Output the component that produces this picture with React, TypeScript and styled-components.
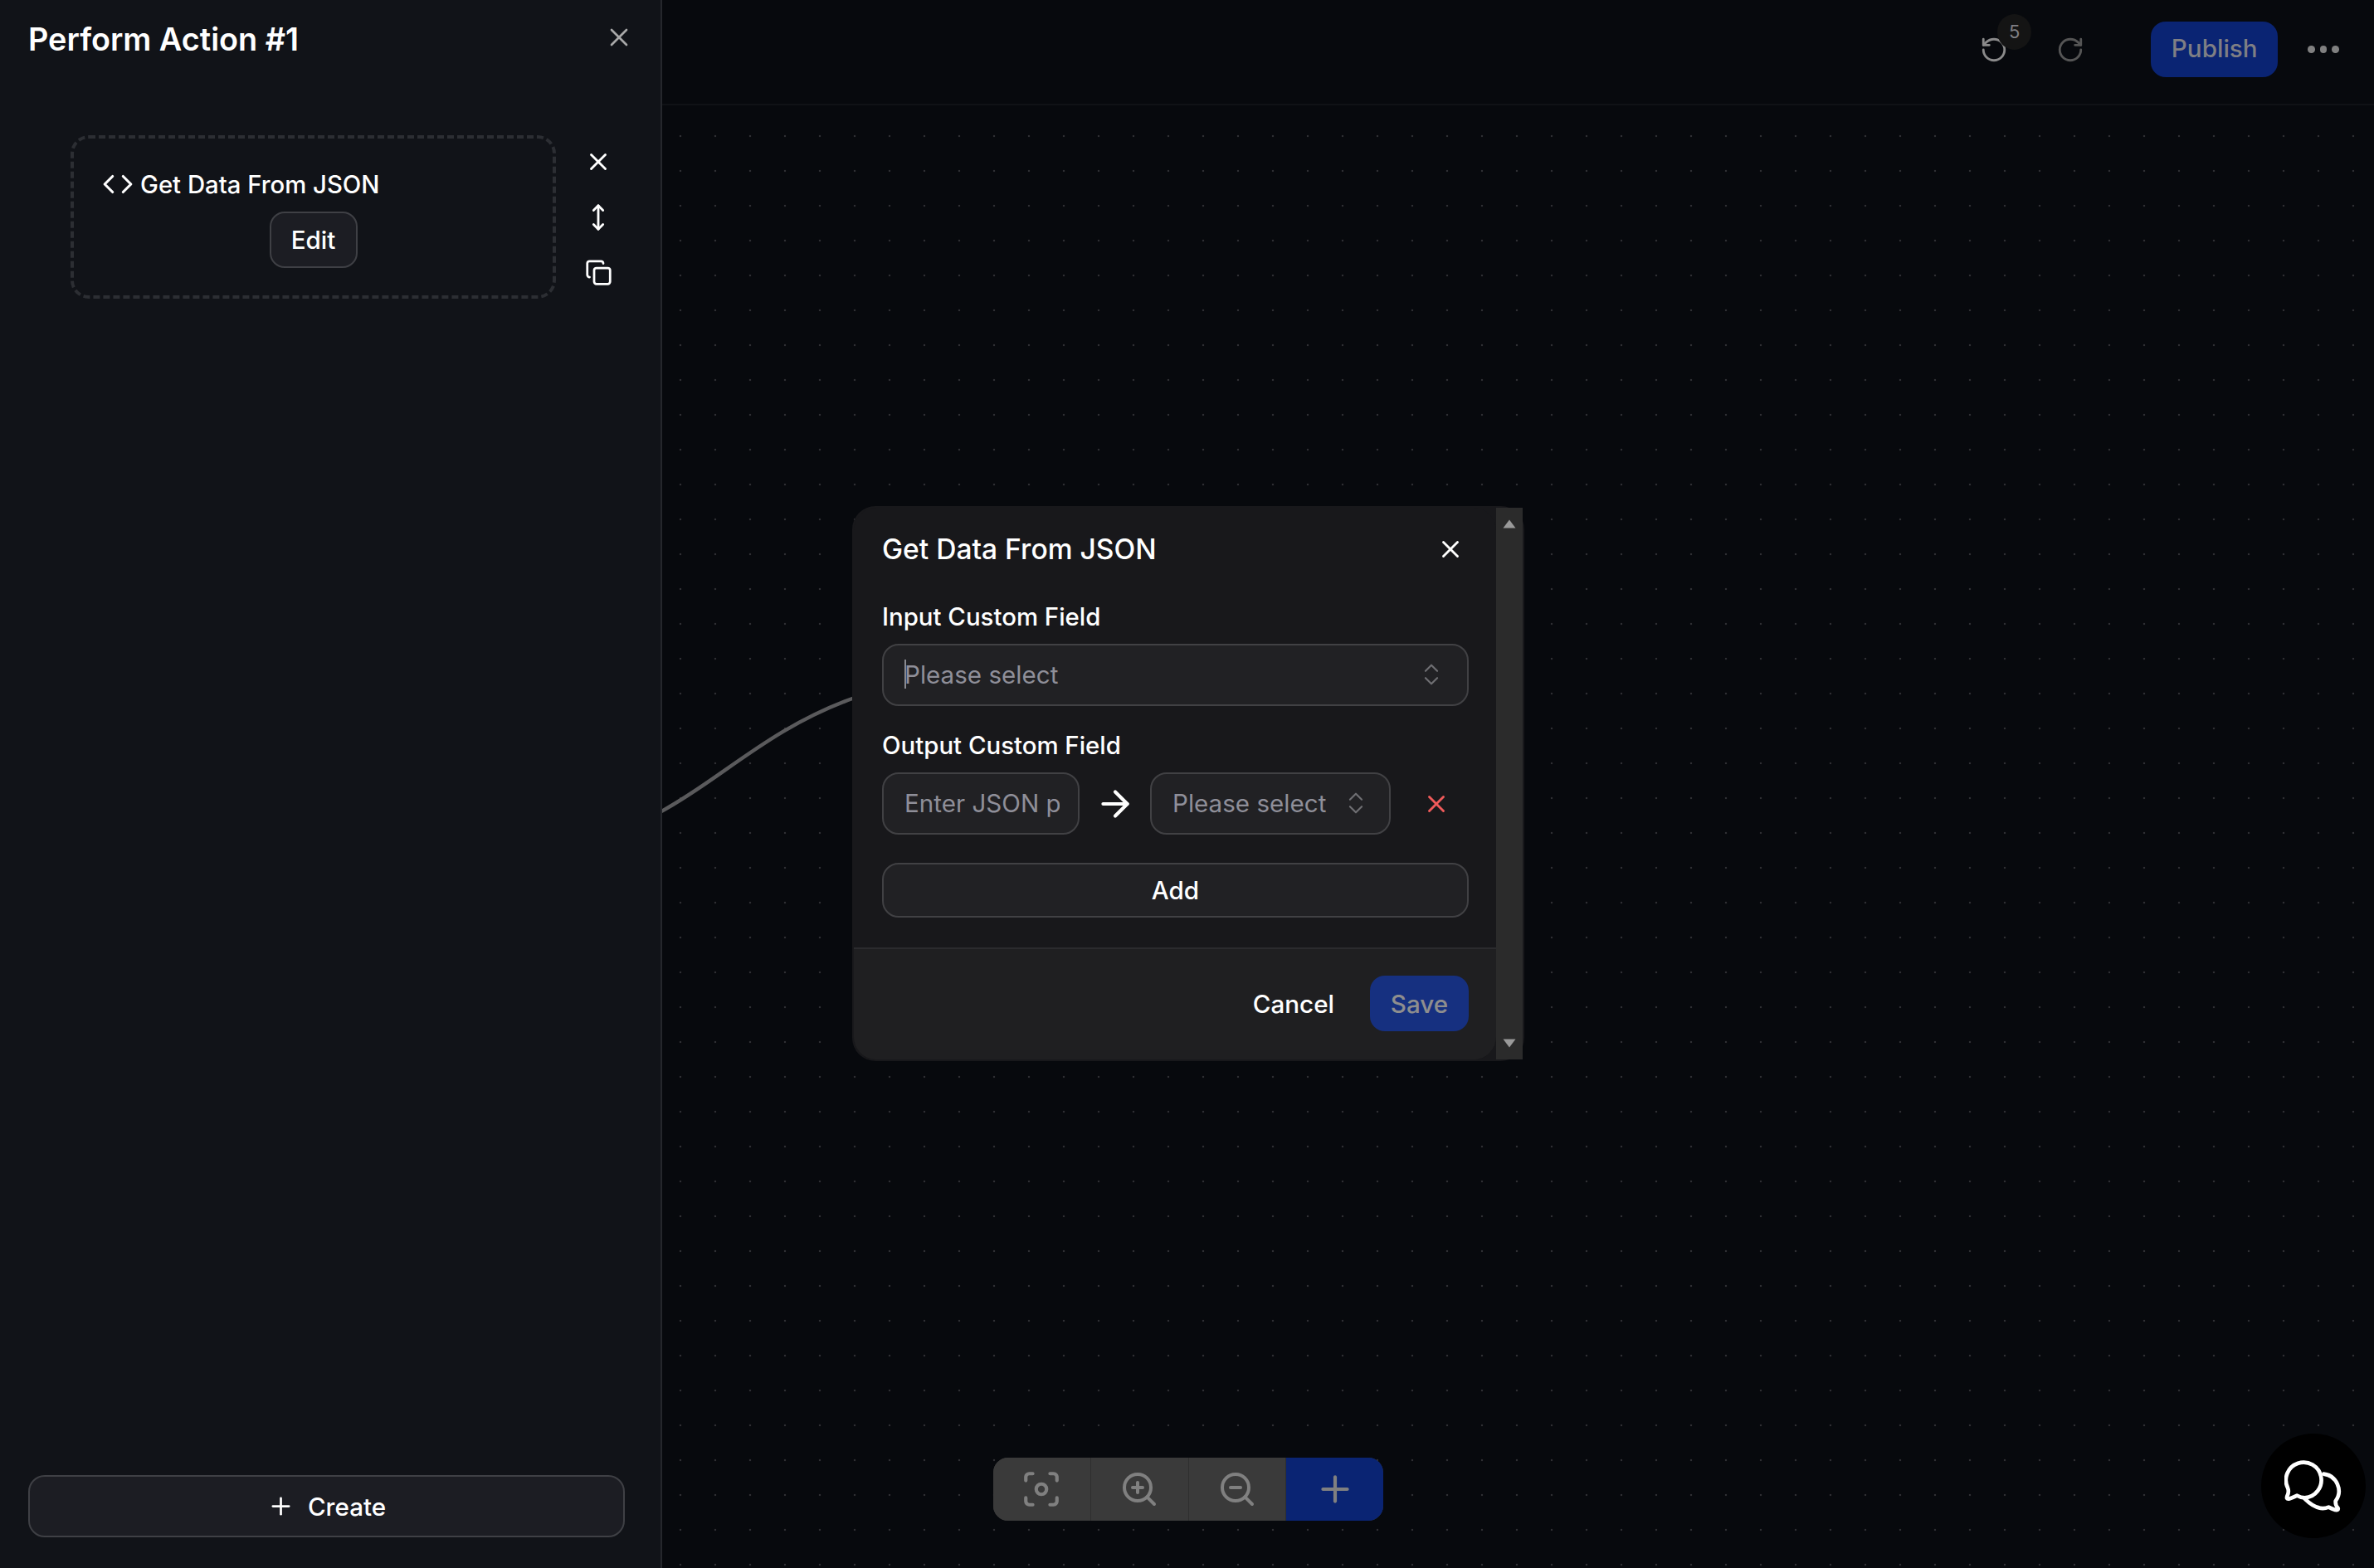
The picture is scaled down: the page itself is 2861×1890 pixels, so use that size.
import styled, { createGlobalStyle } from 'styled-components';
import {
    ArrowRight,
    ChevronsUpDown,
    Code,
    Copy,
    Focus,
    MoveVertical,
    Plus,
    RotateCcw,
    RotateCw,
    X,
    ZoomIn,
    ZoomOut,
} from 'lucide-react';

const GlobalStyle = createGlobalStyle`
    * {
        box-sizing: border-box;
    }
    html, body {
        margin: 0;
        height: 100%;
        background: #07090d;
        overflow: hidden;
    }
    body {
        font-family: Inter, "Liberation Sans", sans-serif;
        color: #ffffff;
    }
    #root {
        height: 100%;
    }
`;

const Page = styled.div`
    display: flex;
    height: 100%;
`;

const Sidebar = styled.aside`
    width: 798px;
    flex: none;
    display: flex;
    flex-direction: column;
    background: #111318;
    border-right: 2px solid #25272c;
`;

const SidebarHeader = styled.div`
    display: flex;
    align-items: center;
    justify-content: space-between;
    padding: 25px 32px 0 34px;
`;

const SidebarTitle = styled.h1`
    margin: 0;
    font-size: 37.8px;
    line-height: 44px;
    font-weight: 600;
`;

const IconButton = styled.button<{ $tone?: string }>`
    display: flex;
    align-items: center;
    justify-content: center;
    padding: 0;
    background: none;
    border: none;
    color: ${(p) => p.$tone || '#ffffff'};
`;

const CloseOffset = styled.span`
    display: flex;
    margin-top: -5px;
`;

const CardRow = styled.div`
    display: flex;
    margin-top: 94px;
    padding-left: 85px;
`;

const DashedCard = styled.div`
    width: 585px;
    height: 197px;
    display: flex;
    flex-direction: column;
    padding: 36px 31px 0 34px;
    border: 4px dashed #2c2e33;
    border-radius: 22px;
`;

const CardTitle = styled.div`
    display: flex;
    align-items: center;
    gap: 8px;
    height: 38px;
    font-size: 29.3px;
    font-weight: 500;
`;

const EditButton = styled.button`
    align-self: center;
    width: 106px;
    height: 68px;
    margin: 14px 0 0 -3px;
    background: #1c1d23;
    border: 2px solid #3f4045;
    border-radius: 18px;
    color: #ffffff;
    font-family: inherit;
    font-size: 29.6px;
    font-weight: 500;
`;

const CardActions = styled.div`
    display: flex;
    flex-direction: column;
    gap: 33px;
    margin: 15px 0 0 34px;
`;

const SidebarFooter = styled.div`
    margin-top: auto;
    padding: 0 43px 37px 34px;
`;

const OutlineButton = styled.button<{ $height: number }>`
    width: 100%;
    height: ${(p) => p.$height}px;
    display: flex;
    align-items: center;
    justify-content: center;
    gap: 16px;
    background: ${(p) => (p.$height === 75 ? '#1c1d23' : '#212124')};
    border: 2px solid ${(p) => (p.$height === 75 ? '#3f4045' : '#414144')};
    border-radius: 20px;
    color: #ffffff;
    font-family: inherit;
    font-size: 29.6px;
    font-weight: 500;
`;

const Workspace = styled.main`
    position: relative;
    flex: 1;
    display: flex;
    flex-direction: column;
    background: #07090d;
`;

const TopBar = styled.header`
    height: 127px;
    flex: none;
    display: flex;
    align-items: center;
    justify-content: flex-end;
    padding: 0 42px 6px 0;
    border-bottom: 2px solid #101216;
`;

const HistoryGroup = styled.div`
    display: flex;
    align-items: center;
    gap: 58px;
    margin-right: 80px;
`;

const UndoWrap = styled.div`
    position: relative;
    display: flex;
`;

const CountBadge = styled.span`
    position: absolute;
    left: 21px;
    top: -26px;
    width: 41px;
    height: 43px;
    display: flex;
    align-items: center;
    justify-content: center;
    background: #141414;
    border-radius: 50%;
    color: #7f7f84;
    font-size: 22px;
`;

const PublishButton = styled.button`
    width: 153px;
    height: 67px;
    padding: 0 0 3px 0;
    background: #0a2473;
    border: none;
    border-radius: 18px;
    color: #7f7f84;
    font-family: inherit;
    font-size: 29.6px;
    font-weight: 500;
`;

const MoreDots = styled.div`
    display: flex;
    gap: 6px;
    margin-left: 36px;
`;

const Dot = styled.span`
    width: 8.6px;
    height: 8.6px;
    background: #808080;
    border-radius: 50%;
`;

const Surface = styled.div`
    flex: 1;
    background-color: #07090d;
    background-image: radial-gradient(circle at 21px 21px, #2e2f33 1.3px, transparent 1.6px);
    background-size: 42px 42px;
    background-position: 1px 16px;
`;

const Connector = styled.svg`
    position: absolute;
    left: 0;
    top: 835px;
`;

const Modal = styled.div`
    position: absolute;
    left: 229px;
    top: 610px;
    width: 810px;
    height: 669px;
    display: flex;
    padding: 2px;
    background: #18181b;
    border-radius: 28px;
`;

const ModalMain = styled.div`
    flex: 1;
    display: flex;
    flex-direction: column;
    background: #18181b;
    border-radius: 27px;
    overflow: hidden;
`;

const ModalHeader = styled.div`
    height: 114px;
    flex: none;
    display: flex;
    align-items: flex-start;
    justify-content: space-between;
    padding: 33px 38px 0 34px;
`;

const ModalTitle = styled.h2`
    margin: 0;
    font-size: 33.6px;
    line-height: 34px;
    font-weight: 500;
`;

const ModalBody = styled.div`
    flex: 1;
    display: flex;
    flex-direction: column;
    padding: 0 33px 0 34px;
`;

const FieldLabel = styled.label<{ $top?: number }>`
    margin-top: ${(p) => p.$top || 0}px;
    margin-bottom: 14px;
    font-size: 29.4px;
    line-height: 36px;
    font-weight: 500;
`;

const SelectBox = styled.div<{ $width?: number }>`
    position: relative;
    width: ${(p) => (p.$width ? `${p.$width}px` : '100%')};
    height: 75px;
    flex: none;
    display: flex;
    align-items: center;
    justify-content: space-between;
    padding: 0 ${(p) => (p.$width ? 23 : 26)}px 2px 25px;
    background: #212124;
    border: 2px solid #414144;
    border-radius: 20px;
    color: #8f8f99;
    font-size: 29.6px;
`;

const TextCaret = styled.span`
    position: absolute;
    left: 25px;
    top: 17px;
    width: 2px;
    height: 35px;
    background: #8a8a90;
`;

const PathInput = styled.input`
    width: 238px;
    height: 75px;
    flex: none;
    padding: 0 22px 2px 25px;
    background: #212124;
    border: 2px solid #414144;
    border-radius: 20px;
    color: #ffffff;
    font-family: inherit;
    font-size: 29.6px;
    outline: none;
    &::placeholder {
        color: #8f8f99;
        opacity: 1;
    }
`;

const MappingRow = styled.div`
    display: flex;
    align-items: center;
    height: 75px;
`;

const ArrowSlot = styled.span`
    width: 85px;
    flex: none;
    display: flex;
    justify-content: center;
`;

const RemoveSlot = styled.span`
    margin-left: 38px;
    display: flex;
    color: #f05a5a;
`;

const AddRow = styled.div`
    margin-top: 34px;
`;

const ModalFooter = styled.div`
    height: 135px;
    flex: none;
    display: flex;
    align-items: center;
    justify-content: flex-end;
    gap: 43px;
    padding: 0 33px 2px 33px;
    background: #1f1f21;
    border-top: 2px solid #2b2b2e;
`;

const CancelButton = styled.button`
    padding: 0;
    background: none;
    border: none;
    color: #ffffff;
    font-family: inherit;
    font-size: 29.6px;
    font-weight: 500;
`;

const SaveButton = styled.button`
    width: 119px;
    height: 67px;
    background: #163080;
    border: none;
    border-radius: 18px;
    color: #8e8e8e;
    font-family: inherit;
    font-size: 29.6px;
    font-weight: 500;
`;

const Scrollbar = styled.div`
    width: 32px;
    flex: none;
    display: flex;
    flex-direction: column;
    align-items: center;
    justify-content: space-between;
    padding: 14px 0;
    background: #2b2b2b;
`;

const ScrollArrow = styled.svg`
    display: block;
`;

const ZoomBar = styled.div`
    position: absolute;
    left: 399px;
    bottom: 57px;
    width: 470px;
    height: 76px;
    display: flex;
    border-radius: 18px;
    overflow: hidden;
    background: #3a3a3a;
`;

const ZoomCell = styled.button<{ $primary?: boolean }>`
    flex: 1;
    display: flex;
    align-items: center;
    justify-content: center;
    padding: 0;
    background: ${(p) => (p.$primary ? '#0a2473' : '#3a3a3a')};
    border: none;
    border-right: ${(p) => (p.$primary ? 'none' : '1.5px solid #2f2f2f')};
    color: #808080;
`;

const ChatBubble = styled.button`
    position: absolute;
    right: 10px;
    bottom: 36px;
    width: 126px;
    height: 126px;
    display: flex;
    align-items: center;
    justify-content: center;
    padding: 0;
    background: #000000;
    border: none;
    border-radius: 50%;
`;

function ChatIcon() {
    return (
        <svg width="70" height="65" viewBox="220 145 210 195" fill="none" stroke="#ffffff" strokeWidth="14" strokeLinecap="round" strokeLinejoin="round">
            <path d="M236 288 Q226 290 230 278 Q238 262 232 248 A64 64 0 1 1 294 284 Q280 284 266 276 Q250 284 236 288 Z" />
            <path d="M362 198 A62 62 0 0 1 405 296 Q404 312 414 322 Q416 330 404 328 Q392 324 380 318 Q340 334 294 288" />
        </svg>
    );
}

export default function App() {
    return (
        <Page>
            <GlobalStyle />
            <Sidebar>
                <SidebarHeader>
                    <SidebarTitle>Perform Action #1</SidebarTitle>
                    <IconButton $tone="#a8a8a8">
                        <CloseOffset><X size={36} strokeWidth={1.8} /></CloseOffset>
                    </IconButton>
                </SidebarHeader>
                <CardRow>
                    <DashedCard>
                        <CardTitle>
                            <Code size={38} strokeWidth={2} />
                            Get Data From JSON
                        </CardTitle>
                        <EditButton>Edit</EditButton>
                    </DashedCard>
                    <CardActions>
                        <IconButton><X size={34} /></IconButton>
                        <IconButton><MoveVertical size={34} /></IconButton>
                        <IconButton><Copy size={33} /></IconButton>
                    </CardActions>
                </CardRow>
                <SidebarFooter>
                    <OutlineButton $height={75}>
                        <Plus size={33} />
                        Create
                    </OutlineButton>
                </SidebarFooter>
            </Sidebar>
            <Workspace>
                <TopBar>
                    <HistoryGroup>
                        <UndoWrap>
                            <IconButton $tone="#8a8a8a"><RotateCcw size={34} /></IconButton>
                            <CountBadge>5</CountBadge>
                        </UndoWrap>
                        <IconButton $tone="#555555"><RotateCw size={34} /></IconButton>
                    </HistoryGroup>
                    <PublishButton>Publish</PublishButton>
                    <MoreDots>
                        <Dot />
                        <Dot />
                        <Dot />
                    </MoreDots>
                </TopBar>
                <Surface />
                <Connector width="240" height="150" viewBox="0 0 240 150" fill="none">
                    <path d="M-1 143 C70 105 130 42 232 6" stroke="#5a5a5c" strokeWidth="4.5" />
                </Connector>
                <Modal>
                    <ModalMain>
                        <ModalHeader>
                            <ModalTitle>Get Data From JSON</ModalTitle>
                            <IconButton><X size={34} /></IconButton>
                        </ModalHeader>
                        <ModalBody>
                            <FieldLabel>Input Custom Field</FieldLabel>
                            <SelectBox>
                                <TextCaret />
                                Please select
                                <ChevronsUpDown size={34} strokeWidth={1.5} color="#6f6f73" />
                            </SelectBox>
                            <FieldLabel $top={30}>Output Custom Field</FieldLabel>
                            <MappingRow>
                                <PathInput placeholder="Enter JSON path" />
                                <ArrowSlot><ArrowRight size={50} color="#ffffff" /></ArrowSlot>
                                <SelectBox $width={290}>
                                    Please select
                                    <ChevronsUpDown size={34} strokeWidth={1.5} color="#6f6f73" />
                                </SelectBox>
                                <RemoveSlot><X size={34} /></RemoveSlot>
                            </MappingRow>
                            <AddRow>
                                <OutlineButton $height={66}>Add</OutlineButton>
                            </AddRow>
                        </ModalBody>
                        <ModalFooter>
                            <CancelButton>Cancel</CancelButton>
                            <SaveButton>Save</SaveButton>
                        </ModalFooter>
                    </ModalMain>
                    <Scrollbar>
                        <ScrollArrow width="16" height="11" viewBox="0 0 16 11">
                            <path d="M8 0.5 L15.5 10.5 H0.5 Z" fill="#9a9a9a" />
                        </ScrollArrow>
                        <ScrollArrow width="16" height="11" viewBox="0 0 16 11">
                            <path d="M8 10.5 L15.5 0.5 H0.5 Z" fill="#9a9a9a" />
                        </ScrollArrow>
                    </Scrollbar>
                </Modal>
                <ZoomBar>
                    <ZoomCell><Focus size={50} /></ZoomCell>
                    <ZoomCell><ZoomIn size={48} /></ZoomCell>
                    <ZoomCell><ZoomOut size={48} /></ZoomCell>
                    <ZoomCell $primary><Plus size={50} /></ZoomCell>
                </ZoomBar>
                <ChatBubble><ChatIcon /></ChatBubble>
            </Workspace>
        </Page>
    );
}
